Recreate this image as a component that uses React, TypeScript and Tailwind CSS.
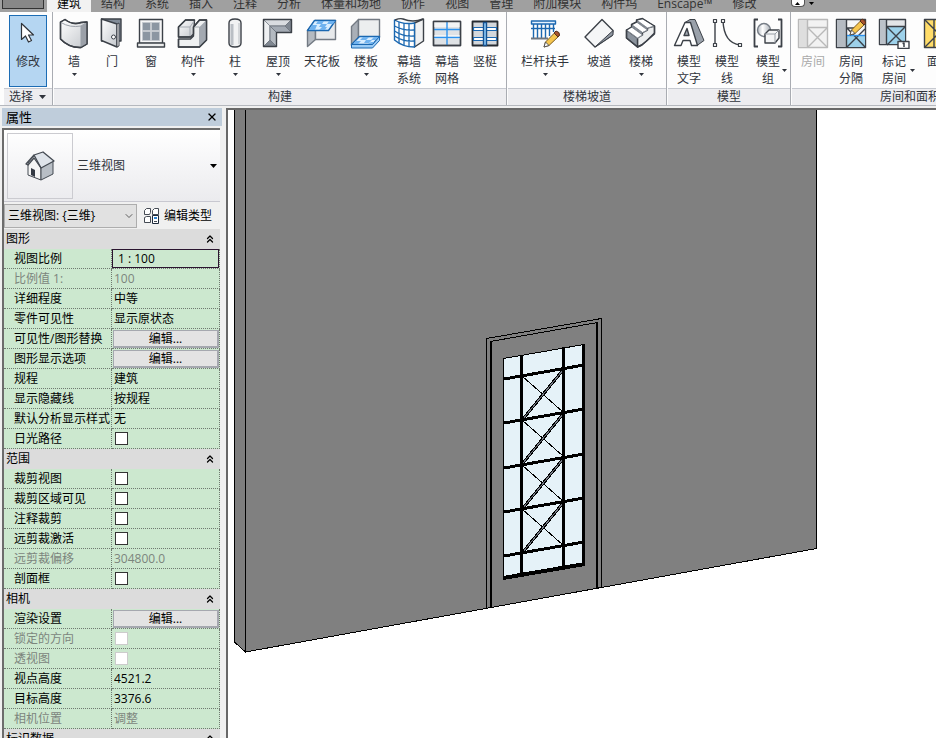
import type { ReactNode } from "react";
import clsx from "clsx";
import { ChevronDown, ChevronsUp, X } from "lucide-react";

type Kind = "text" | "input" | "scale" | "button" | "check";

interface Property {
  name: string;
  kind: Kind;
  value?: string;
  disabled?: boolean;
}

interface Group {
  title: string;
  rows: Property[];
}

interface Tool {
  lines: string[];
  icon: ReactNode;
  width: string;
  menu?: "below" | "side";
  disabled?: boolean;
}

interface Panel {
  title: string;
  width: string;
  tools: Tool[];
}

const tabs = [
  "建筑",
  "结构",
  "系统",
  "插入",
  "注释",
  "分析",
  "体量和场地",
  "协作",
  "视图",
  "管理",
  "附加模块",
  "构件坞",
  "Enscape™",
  "修改",
];

const groups: Group[] = [
  {
    title: "图形",
    rows: [
      { name: "视图比例", kind: "scale", value: "1 : 100" },
      { name: "比例值 1:", kind: "input", value: "100", disabled: true },
      { name: "详细程度", kind: "text", value: "中等" },
      { name: "零件可见性", kind: "text", value: "显示原状态" },
      { name: "可见性/图形替换", kind: "button", value: "编辑..." },
      { name: "图形显示选项", kind: "button", value: "编辑..." },
      { name: "规程", kind: "text", value: "建筑" },
      { name: "显示隐藏线", kind: "text", value: "按规程" },
      { name: "默认分析显示样式", kind: "text", value: "无" },
      { name: "日光路径", kind: "check" },
    ],
  },
  {
    title: "范围",
    rows: [
      { name: "裁剪视图", kind: "check" },
      { name: "裁剪区域可见", kind: "check" },
      { name: "注释裁剪", kind: "check" },
      { name: "远剪裁激活", kind: "check" },
      { name: "远剪裁偏移", kind: "input", value: "304800.0", disabled: true },
      { name: "剖面框", kind: "check" },
    ],
  },
  {
    title: "相机",
    rows: [
      { name: "渲染设置", kind: "button", value: "编辑..." },
      { name: "锁定的方向", kind: "check", disabled: true },
      { name: "透视图", kind: "check", disabled: true },
      { name: "视点高度", kind: "input", value: "4521.2" },
      { name: "目标高度", kind: "input", value: "3376.6" },
      { name: "相机位置", kind: "text", value: "调整", disabled: true },
    ],
  },
  { title: "标识数据", rows: [] },
];

function Icon({ children, stroke = "#3c4148" }: { children: ReactNode; stroke?: string }) {
  return (
    <svg
      width="32"
      height="32"
      viewBox="0 0 32 32"
      fill="none"
      stroke={stroke}
      strokeWidth="1.4"
      strokeLinejoin="round"
      aria-hidden="true"
      className="shrink-0"
    >
      <defs>
        <linearGradient id="metal" x1="0" y1="0" x2="1" y2="1">
          <stop offset="0" stopColor="#ffffff" />
          <stop offset="1" stopColor="#c3c7cc" />
        </linearGradient>
        <linearGradient id="steel" x1="0" y1="0" x2="1" y2="0">
          <stop offset="0" stopColor="#b4bac1" />
          <stop offset="0.4" stopColor="#ffffff" />
          <stop offset="1" stopColor="#a9afb7" />
        </linearGradient>
      </defs>
      {children}
    </svg>
  );
}

const cursorIcon = (
  <Icon stroke="#30343a">
    <path d="M9.500 6.500v16l4-3.500 3 6 3-1.500-3-5.500h5z" fill="#fff" strokeWidth="1.200" />
  </Icon>
);

const wallIcon = (
  <Icon>
    <path d="M2.500 5L7 2.500q8 6 16 3l6-.5v22l-6 3.500q-12 .5-20.500-8.500z" fill="url(#metal)" />
    <path d="M23 9l6-3.500V27l-6 3.500z" fill="#9ba0a8" stroke="none" />
    <path d="M3 5.500Q12 11 23 9l5.500-3.500M23 9v21" stroke="#9aa0a8" strokeWidth="1" />
    <path d="M2.500 5L7 2.500q8 6 16 3l6-.5v22l-6 3.500q-12 .5-20.500-8.500z" />
  </Icon>
);

const doorIcon = (
  <Icon>
    <path d="M5.500 2h19.500v22h-19.500z" fill="#828c98" />
    <path d="M5.500 2l15.500 5v23l-15.500-6.500z" fill="url(#metal)" />
    <path d="M21 7l2-1v23l-2 1z" fill="#fff" strokeWidth="1" />
    <circle cx="17.500" cy="20" r="2" fill="#fff" strokeWidth="1" />
  </Icon>
);

const windowIcon = (
  <Icon>
    <path d="M4.500 2.500h23v24h-23z" fill="#f6f6f7" />
    <path d="M7.500 5.500h8v8h-8zM16.500 5.500h8v8h-8zM7.500 14.500h8v9h-8zM16.500 14.500h8v9h-8z" fill="#8c96a2" stroke="#c4c8ce" strokeWidth="1" />
    <path d="M2.500 26h27v4h-27z" fill="#eceded" />
  </Icon>
);

const componentIcon = (
  <Icon>
    <path d="M1.500 10l7-7h9l-1 17h-15z" fill="url(#metal)" />
    <path d="M16.500 10l6-7h7v20l-7 7h-21v-8h12l3-3z" fill="#eef0f1" />
    <path d="M22.500 10l7-7v20l-7 7z" fill="#a3a9b1" stroke="none" />
    <path d="M2 10h11v9M13 10l4-6M17 10h5.500v19" stroke="#a5abb2" strokeWidth="1" />
    <path d="M17.500 3h-9l-7 7v10h12l3-3v-7l6-7h7v20l-7 7h-21v-8" />
  </Icon>
);

const columnIcon = (
  <Icon>
    <path d="M10 6q0-4 6-4t6 4v20q0 4-6 4t-6-4z" fill="#f1f2f3" />
    <path d="M13 7v21" stroke="#b9bec4" strokeWidth="3" />
    <path d="M20 6v21" stroke="#d4d7da" strokeWidth="2" />
  </Icon>
);

const roofIcon = (
  <Icon>
    <path d="M1.500 2.500h28l-6.500 6.500h-15z" fill="#d9dce0" stroke="#8a9098" strokeWidth="1" />
    <path d="M1.500 2.500v27l6.500-6.500v-14z" fill="#eef0f2" stroke="#8a9098" strokeWidth="1" />
    <path d="M8 9h15l6.500 6.500h-15z" fill="#a4abb4" stroke="#737a83" strokeWidth="1" />
    <path d="M8 9l6.500 6.500v14L8 23z" fill="#b4bac1" stroke="#737a83" strokeWidth="1" />
    <path d="M29.500 2.500v13L23 9zM1.500 29.500h13L8 23z" fill="#7f8791" stroke="#737a83" strokeWidth="1" />
    <path d="M1.500 2.500h28v13h-15v14h-13z" />
  </Icon>
);

const ceilingIcon = (
  <Icon stroke="#737a83">
    <path d="M1.500 13.500v16l8-7v-19z" fill="#b4bac1" />
    <path d="M9.500 3.500h20v19h-20z" fill="#e7e9eb" />
    <path d="M1.500 13.500l7-10h21l-7 10z" fill="#d8edff" stroke="#1b68b1" />
    <path d="M12 4h6l-2 3h-6zM23 4h6l-2 3h-6zM15 7h6l-2 3h-6zM6 8h5l-2 5h-6zM16 10h5l-2 3h-6z" fill="#6fb2ef" stroke="none" />
  </Icon>
);

const floorIcon = (
  <Icon stroke="#737a83">
    <path d="M1.500 9.500l7-7v18l-7 8z" fill="#a9afb7" />
    <path d="M8.500 2.500h21v18h-21z" fill="#eceeef" />
    <path d="M1.500 27.500l8-8h20l-7 8z" fill="#d8edff" stroke="#1b68b1" />
    <path d="M13 20h6l-3 3h-6zM24 20h5l-3 3h-5zM16 23h6l-3 3h-5zM6 24h5l-3 3h-5zM21 25h4l-3 2h-4z" fill="#6fb2ef" stroke="none" />
    <path d="M1.500 27.500h21l7-8v4l-7 7.500h-21z" fill="#9acbf5" stroke="#1b68b1" strokeWidth="1" />
  </Icon>
);

const curtainSystemIcon = (
  <Icon>
    <path d="M21.500 6l9-4v22l-9 6z" fill="#f0f1f2" />
    <path d="M1.500 3q9 5 20 3v24q-12 0-20-7z" fill="#fff" stroke="#1b68b1" />
    <path d="M1.500 9q9 5 20 4M1.500 14q9 6 20 5M1.500 19q9 6 20 5M6 5v21M11 6v22M16 7v22" stroke="#1b68b1" strokeWidth="1.300" />
    <path d="M2 3q5-2 8-1 10 4 20 0" />
  </Icon>
);

const curtainGridIcon = (
  <Icon>
    <path d="M2.500 4.500h27v24h-27z" fill="#dfe2e5" />
    <path d="M3 5h26v5H3zM3 18h26v4H3z" fill="#f3f4f5" stroke="none" />
    <path d="M3 12.500h26M3 20.500h26M16 5v23" stroke="#2d92ee" />
    <path d="M2.500 4.500h27v24h-27z" />
  </Icon>
);

const mullionIcon = (
  <Icon stroke="#262b31">
    <path d="M3.500 4.500h25v24h-25z" fill="#d3d7db" strokeWidth="1.800" />
    <path d="M4.500 10.500h23v3h-23zM4.500 20.500h23v3h-23z" fill="#fff" stroke="#1b68b1" strokeWidth="1.200" />
    <path d="M14.500 5.500h3v23h-3z" fill="#8ccbfa" stroke="#17508d" />
  </Icon>
);

const pencil = (
  <g strokeWidth="1">
    <path d="M15 30l1.500-5 10-10 4 3.500-10.500 10z" fill="#f6c64e" stroke="#7d5a1c" />
    <path d="M25 16l2-2q4 1 3.500 4l-1.500 2z" fill="#a9552f" stroke="#53301c" />
    <path d="M15 30l1.500-5 3.500 3.500z" fill="#fff" stroke="#555" />
  </g>
);

const railingIcon = (
  <Icon stroke="#1b68b1">
    <path d="M2.500 4h24v3h-24z" fill="#e4f2ff" />
    <path d="M4.500 7v14M8.500 7v14M12.500 7v14M16.500 7v14M20.500 7v12M24.500 7v8" strokeWidth="1.400" />
    <path d="M2 11.500h24" />
    <path d="M2 21.500h17" stroke="#6f7780" strokeWidth="2" />
    {pencil}
  </Icon>
);

const rampIcon = (
  <Icon>
    <path d="M2 20L19 2.500l11 11-1 5-17 11.500z" fill="#f5f6f7" />
    <path d="M12 30L30 13.500V18z" fill="#8f97a1" strokeWidth="1" />
  </Icon>
);

const stairIcon = (
  <Icon>
    <path d="M12.500 30v-9l5-3v-2.500l5-2.500v-2l7-2v7l-8 8-5 4z" fill="#eceeef" />
    <path d="M1.500 13l11 8v9l-11-9z" fill="#8b939d" />
    <path d="M6.500 7.500l11 8V18l-11-8zM11.500 3l11 8v2l-11-8z" fill="#8b939d" strokeWidth="1" />
    <path d="M1.500 13l5-3 11 8-5 3zM6.500 7.500l5-2.500 11 8-5 2.500zM11.500 3l6-1.500L29.500 9l-7 2z" fill="#fff" stroke="#8a9098" strokeWidth="1" />
    <path d="M1.500 13l5-3V7.500l5-2.500V3l6-1.500L29.500 9v8L17 28l-4.500 2-11-9z" />
  </Icon>
);

const modelTextIcon = (
  <Icon>
    <path d="M12 5.500l5-3h5l9 21-7 5z" fill="#9aa1aa" strokeWidth="1" />
    <path d="M1.500 28.500L12 5.500h5.500l7 23h-6l-1.500-5h-7l-2 5z" fill="#fff" />
    <path d="M11 18.500h5l-2-7z" fill="#a5acb5" />
  </Icon>
);

const modelLineIcon = (
  <Icon>
    <path d="M4 4v24M12 4q1 22 17 24" />
    <path d="M2.500 2.500h3v3h-3zM2.500 26.500h3v3h-3zM10.500 2.500h3v3h-3zM27.500 26.500h3v3h-3z" fill="#fff" strokeWidth="1.200" />
  </Icon>
);

const modelGroupIcon = (
  <Icon>
    <path d="M6 2.500H2.500v27H6M26 2.500h3.500v27H26" strokeWidth="1.800" />
    <circle cx="12" cy="13" r="6.500" fill="url(#steel)" stroke="#777e87" />
    <path d="M13 17l4-4h10v8l-4 5H13z" fill="#f4f5f6" />
    <path d="M13 17h10v9M23 17l4-4" stroke="#9aa0a8" strokeWidth="1" />
  </Icon>
);

const roomIcon = (
  <Icon stroke="#b9b9b9">
    <path d="M1.500 2.500h29v28h-29z" fill="#f2f2f2" />
    <path d="M2 3h8v27H2z" fill="#dedede" stroke="none" />
    <path d="M10.500 3v27M11 10.500h19M11 11l19 19M30 11L11 30" />
  </Icon>
);

const roomSeparatorIcon = (
  <Icon>
    <path d="M1.500 2.500h29v28h-29z" fill="#f5f6f7" />
    <path d="M2 3h9v27H2z" fill="#b5bbc2" stroke="none" />
    <path d="M12 19h18v11H12z" fill="#9dd1ea" stroke="none" />
    <path d="M11.500 3v27M12 11h11M12 11l18 19M30 12L12 30" />
    <path d="M12 18.500h18" stroke="#2d92ee" />
    <g transform="translate(0 -12)">{pencil}</g>
  </Icon>
);

const tagRoomIcon = (
  <Icon>
    <path d="M1.500 2.500h26v25h-26z" fill="#e2e5e8" />
    <path d="M2 3h6v24H2z" fill="#bcc2c9" stroke="none" />
    <path d="M9 9h18v18H9z" fill="#9dd1ea" stroke="none" />
    <path d="M8.500 3v25M9 9.500h18M9 10l18 18M27 10L9 28" />
    <path d="M20 24.500h11v7H20z" fill="#fff" />
    <path d="M24.500 26.500l1.500-.5v4" strokeWidth="1.500" />
  </Icon>
);

const areaIcon = (
  <Icon>
    <path d="M1.500 2.500h28v28h-28z" fill="#ffdc68" />
    <path d="M11 3v27M2 3l27 27M29 3L2 30" />
  </Icon>
);

const panels: Panel[] = [
  {
    title: "构建",
    width: "w-[454px]",
    tools: [
      { lines: ["墙"], icon: wallIcon, width: "w-10", menu: "below" },
      { lines: ["门"], icon: doorIcon, width: "w-9" },
      { lines: ["窗"], icon: windowIcon, width: "w-[42px]" },
      { lines: ["构件"], icon: componentIcon, width: "w-[42px]", menu: "below" },
      { lines: ["柱"], icon: columnIcon, width: "w-[42px]", menu: "below" },
      { lines: ["屋顶"], icon: roofIcon, width: "w-11", menu: "below" },
      { lines: ["天花板"], icon: ceilingIcon, width: "w-11" },
      { lines: ["楼板"], icon: floorIcon, width: "w-11", menu: "below" },
      { lines: ["幕墙", "系统"], icon: curtainSystemIcon, width: "w-[42px]" },
      { lines: ["幕墙", "网格"], icon: curtainGridIcon, width: "w-[34px]" },
      { lines: ["竖梃"], icon: mullionIcon, width: "w-[42px]" },
    ],
  },
  {
    title: "楼梯坡道",
    width: "w-40",
    tools: [
      { lines: ["栏杆扶手"], icon: railingIcon, width: "w-[74px]", menu: "below" },
      { lines: ["坡道"], icon: rampIcon, width: "w-[34px]" },
      { lines: ["楼梯"], icon: stairIcon, width: "w-[50px]", menu: "below" },
    ],
  },
  {
    title: "模型",
    width: "w-[124px]",
    tools: [
      { lines: ["模型", "文字"], icon: modelTextIcon, width: "w-[42px]" },
      { lines: ["模型", "线"], icon: modelLineIcon, width: "w-[34px]" },
      { lines: ["模型", "组"], icon: modelGroupIcon, width: "w-[48px]", menu: "side" },
    ],
  },
  {
    title: "房间和面积",
    width: "w-[238px]",
    tools: [
      { lines: ["房间"], icon: roomIcon, width: "w-[42px]", disabled: true },
      { lines: ["房间", "分隔"], icon: roomSeparatorIcon, width: "w-[34px]" },
      { lines: ["标记", "房间"], icon: tagRoomIcon, width: "w-[52px]", menu: "side" },
      { lines: ["面积"], icon: areaIcon, width: "w-[38px]" },
    ],
  },
];

function Caret({ className }: { className?: string }) {
  return (
    <svg width="7" height="4" viewBox="0 0 7 4" aria-hidden="true" className={className}>
      <path d="M0 0h7L3.500 4z" fill="currentColor" />
    </svg>
  );
}

function ToolButton({ tool }: { tool: Tool }) {
  return (
    <button
      disabled={tool.disabled}
      className={clsx(
        "relative flex shrink-0 flex-col items-center pt-[5px] leading-[17px]",
        tool.width,
        tool.disabled ? "text-[#a9a9a9]" : "text-[#30343c]"
      )}
    >
      {tool.icon}
      <span className="mt-1 flex flex-col whitespace-nowrap">
        {tool.lines.map((line) => (
          <span key={line}>{line}</span>
        ))}
      </span>
      {tool.menu === "below" && <Caret className="mt-[3px] h-[3px] w-[5px]" />}
      {tool.menu === "side" && (
        <Caret className="absolute right-[5px] bottom-4 h-[3px] w-[5px]" />
      )}
    </button>
  );
}

function Ribbon() {
  return (
    <header className="shrink-0">
      <nav className="flex h-3 items-end overflow-hidden bg-[#a0a0a0] leading-4 text-[#333]">
        <button
          aria-label="应用程序菜单"
          className="ml-[2px] h-[9px] w-[42px] shrink-0 self-start border border-t-0 border-[#333] bg-[#888]"
        />
        <div className="ml-[3px] flex">
          {tabs.map((tab, i) => (
            <button
              key={tab}
              className={clsx("px-[10px] whitespace-nowrap", i === 0 && "bg-[#f2f2f2] text-black")}
            >
              {tab}
            </button>
          ))}
        </div>
        <button
          aria-label="最小化功能区"
          className="ml-6 flex items-center gap-1 self-start text-black"
        >
          <span className="flex h-[7px] w-[14px] items-center justify-center rounded-b-sm border border-t-0 border-[#555] bg-white">
            <Caret className="h-[3px] w-[5px] rotate-180" />
          </span>
          <Caret className="h-[3px] w-[5px]" />
        </button>
      </nav>
      <div className="flex h-[94px] overflow-hidden border-b border-[#b5b8be] bg-[#fdfdfd] pl-1">
        <section className="flex w-[49px] shrink-0 flex-col border-r border-[#a9acb2]">
          <div className="flex h-[76px] shrink-0 pt-[3px] pl-[5px]">
            <button className="flex h-[72px] w-[38px] flex-col items-center border border-[#1c6cb4] bg-[#b5d6f2] pt-[1px] leading-[17px] text-[#30343c]">
              {cursorIcon}
              <span className="mt-1">修改</span>
            </button>
          </div>
          <button className="flex grow items-center gap-[6px] border-t border-[#c6c9d0] bg-[#ededf0] pl-[5px] leading-4 text-[#30343c]">
            选择
            <Caret />
          </button>
        </section>
        {panels.map((panel) => (
          <section
            key={panel.title}
            className={clsx("flex shrink-0 flex-col border-r border-[#a9acb2] pl-[1px]", panel.width)}
          >
            <div className="flex h-[76px] shrink-0">
              {panel.tools.map((tool) => (
                <ToolButton key={tool.lines.join("")} tool={tool} />
              ))}
            </div>
            <h2 className="flex grow items-center justify-center border-t border-[#c6c9d0] bg-[#ededf0] leading-4 text-[#30343c]">
              {panel.title}
            </h2>
          </section>
        ))}
      </div>
    </header>
  );
}

function HouseIcon() {
  return (
    <svg width="32" height="32" viewBox="0 0 32 32" strokeLinejoin="round" aria-hidden="true">
      <path d="M4 13l7-8 6 12v13L4 25z" fill="#f5f5f5" stroke="#444a52" />
      <path d="M17 16l12-5v13l-12 6z" fill="#b8bec5" stroke="#444a52" />
      <path d="M10 5l9-3 11 9-13 7z" fill="#dfe4ea" stroke="#444a52" strokeWidth="1.300" />
      <path d="M10 5L2 14l2 1 6-7 7 10" fill="none" stroke="#444a52" strokeWidth="1.300" />
      <path d="M7 18l4 2v7l-4-2z" fill="#343a44" />
    </svg>
  );
}

function EditTypeIcon() {
  return (
    <svg width="17" height="17" viewBox="0 0 17 17" fill="#fff" stroke="#454b54" aria-hidden="true">
      <path d="M1.500 3.500l2-2h4v4l-1 2h-5zM9.500 3.500l2-2h4v6h-6zM1.500 10.500l2-1h4v6h-6z" />
      <path d="M9.500 8.500h6v8h-6z" stroke="#1d2a3c" />
      <path d="M11 11h3" stroke="#2f83d0" strokeWidth="2" />
      <path d="M11 14.500h3" />
    </svg>
  );
}

function PropertyValue({ row, id }: { row: Property; id: string }) {
  if (row.kind === "check") {
    return (
      <input
        id={id}
        type="checkbox"
        disabled={row.disabled}
        className="ml-[3px] block size-[13px] appearance-none border border-[#333] bg-white checked:bg-[#333] disabled:border-[#ccc]"
      />
    );
  }
  if (row.kind === "button") {
    return (
      <button
        id={id}
        className="ml-[1px] block h-[18px] w-[106px] border border-[#a5a8af] border-r-2 border-b-2 bg-[#e3e3e3] leading-4"
      >
        {row.value}
      </button>
    );
  }
  if (row.kind === "scale") {
    return (
      <input
        id={id}
        defaultValue={row.value}
        className="block h-[19px] w-full border border-[#2b1530] px-[5px] leading-4 outline-none"
      />
    );
  }
  if (row.kind === "input") {
    return (
      <input
        id={id}
        defaultValue={row.value}
        disabled={row.disabled}
        className="block h-[18px] w-full pl-[2px] outline-none"
      />
    );
  }
  return <span className="block pl-[2px] leading-[18px]">{row.value}</span>;
}

function PropertyTable() {
  return (
    <table className="w-full table-fixed border-separate border-spacing-0 bg-[#cce8cf]">
      <colgroup>
        <col className="w-[108px]" />
        <col />
      </colgroup>
      {groups.map((group) => (
        <tbody key={group.title}>
          <tr className="h-5 bg-[#dcdcdc]">
            <th colSpan={2} className="h-5 p-0 text-left font-normal">
              <button className="flex h-5 w-full items-center justify-between pr-1 pl-[2px] leading-5">
                {group.title}
                <ChevronsUp size={12} strokeWidth={2.5} />
              </button>
            </th>
          </tr>
          {group.rows.map((row) => {
            const id = `${group.title}-${row.name}`;
            return (
              <tr key={row.name} className={row.disabled ? "text-[#7c857d]" : "text-black"}>
                <th className="h-5 border-r border-b border-dotted border-[#6f7a70] p-0 pl-[10px] text-left leading-[18px] font-normal whitespace-nowrap">
                  <label htmlFor={id}>{row.name}</label>
                </th>
                <td className="h-5 border-r border-b border-dotted border-[#6f7a70] p-0 align-middle">
                  <PropertyValue row={row} id={id} />
                </td>
              </tr>
            );
          })}
        </tbody>
      ))}
    </table>
  );
}

function PropertiesPalette() {
  return (
    <aside className="flex w-[226px] shrink-0 flex-col overflow-hidden bg-[#f0f0f0] pl-[2px]">
      <div className="mr-1 flex h-[18px] shrink-0 items-center justify-between bg-[#bfcddb] pr-1 pl-1">
        <h1 className="text-[13px] leading-4 text-black">属性</h1>
        <button aria-label="关闭" className="text-black">
          <X size={12} strokeWidth={2.5} />
        </button>
      </div>
      <div className="mt-[2px] mr-[6px] shrink-0 border-t-2 border-l-2 border-[#6c6c6c]">
        <button className="flex h-[72px] w-full items-center border-b border-[#c8c8d0] bg-linear-to-b from-white to-[#ebebee] pr-[3px] pl-[3px]">
          <span className="flex size-[66px] items-center justify-center border border-[#cbcbd0]">
            <HouseIcon />
          </span>
          <span className="ml-1 grow text-left text-[#30343c]">三维视图</span>
          <Caret />
        </button>
        <div className="flex h-[27px] items-center bg-[#f0f0f0]">
          <div className="relative">
            <select
              aria-label="视图类型"
              className="block h-6 w-[133px] appearance-none border border-[#adadad] bg-[#e1e1e1] pl-[3px] text-black"
            >
              <option>三维视图: {"{三维}"}</option>
            </select>
            <ChevronDown
              size={12}
              strokeWidth={1.5}
              className="pointer-events-none absolute top-[6px] right-[2px] text-[#333]"
            />
          </div>
          <button className="ml-[6px] flex items-center gap-1 text-black">
            <EditTypeIcon />
            编辑类型
          </button>
        </div>
      </div>
      <div className="mr-[6px] border-l-2 border-[#6c6c6c]">
        <PropertyTable />
      </div>
    </aside>
  );
}

// one cell of the lattice every 44px, shared by the bars and the braces
const cells = [0, 44, 89, 133];
const bars = [0, 44, 89, 133, 177];

function ModelView() {
  return (
    <main className="min-w-0 grow overflow-hidden border-t-2 border-l-2 border-[#686868] bg-white">
      <svg
        width="708"
        height="628"
        viewBox="228 110 708 628"
        shapeRendering="crispEdges"
        stroke="#000"
        fill="none"
        role="img"
        aria-label="三维视图"
      >
        <path d="M234.500 100V642l11 10V100z" fill="#7e7e7e" />
        <path d="M245.500 100V652L816.500 548.500V100z" fill="#808080" />
        <path d="M486.500 608V338.500L601.500 318.500V587" />
        <path d="M491 607V341" strokeWidth="2" />
        <path d="M490.500 341.500L597.500 322.500" />
        <path d="M597 322V588" strokeWidth="2" />
        <path d="M503.500 358.500L584 344.500V565L503.500 579z" fill="#e5f2f8" />
        {cells.map((dy) => (
          <g key={dy}>
            <path d={`M522 ${376 + dy}L563 ${412 + dy}`} />
            <path d={`M523 ${419 + dy}L563 ${370 + dy}`} strokeWidth="3" />
            <path d={`M523 ${419 + dy}L563 ${370 + dy}`} stroke="#747a85" />
          </g>
        ))}
        {bars.map((dy) => (
          <path key={dy} d={`M504 ${379 + dy}L584 ${365 + dy}`} strokeWidth="3" />
        ))}
        <path d="M503 578L585 564" strokeWidth="4" />
        <path d="M521.500 355V577M563.500 347V569" strokeWidth="3" />
        <path d="M583.500 344V566" strokeWidth="3" />
      </svg>
    </main>
  );
}

export default function App() {
  return (
    <div className="flex h-screen flex-col overflow-hidden bg-[#f0f0f0] font-['Open_Sans','Noto_Sans_CJK_SC',sans-serif] text-[12px]">
      <Ribbon />
      <div className="flex min-h-0 grow pt-[2px]">
        <PropertiesPalette />
        <ModelView />
      </div>
    </div>
  );
}
